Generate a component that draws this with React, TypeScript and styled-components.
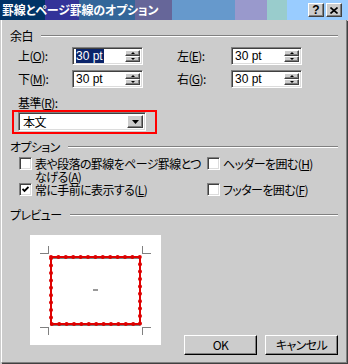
import styled, { createGlobalStyle, css } from 'styled-components';

const GlobalStyle = createGlobalStyle`
  html, body {
    margin: 0;
    padding: 0;
    background: #cccccc;
  }
  body {
    font-family: 'Noto Sans CJK JP', sans-serif;
    font-size: 12px;
    line-height: 12px;
    letter-spacing: -0.6px;
    font-feature-settings: 'palt';
    color: #000;
  }
`;

const sunken = css`
  border: 1px solid;
  border-color: #808080 #ffffff #ffffff #808080;
  box-shadow: inset 1px 1px 0 #404040, inset -1px -1px 0 #dcdcdc;
`;

const raised = css`
  border: 1px solid;
  border-color: #ffffff #404040 #404040 #ffffff;
  box-shadow: inset -1px -1px 0 #808080;
  background: #cccccc;
`;

const Window = styled.div`
  width: 348px;
  height: 364px;
  display: flex;
  flex-direction: column;
  background: #cccccc;
  overflow: hidden;
`;

const TitleBar = styled.div`
  height: 20px;
  flex: none;
  display: flex;
  align-items: center;
  justify-content: space-between;
  padding: 0 6px 0 2px;
  background: linear-gradient(
    to right,
    #003366 0 45px,
    #333399 45px 79px,
    #336699 79px 135px,
    #666699 135px 172px,
    #6699cc 172px 235px,
    #9999cc 235px 267px,
    #99cccc 267px 287px,
    #99ccff 287px
  );
`;

const TitleText = styled.span`
  color: #ffffff;
  font-weight: bold;
  font-size: 12px;
  letter-spacing: -0.2px;
`;

const CaptionButtons = styled.div`
  display: flex;
  gap: 2px;
`;

const CaptionButton = styled.div`
  ${raised};
  width: 16px;
  height: 14px;
  box-sizing: border-box;
  display: flex;
  align-items: center;
  justify-content: center;
  font-family: 'Liberation Sans', sans-serif;
  font-weight: bold;
  font-size: 12px;
  letter-spacing: 0;
`;

const Body = styled.div`
  flex: 1;
  min-height: 0;
  display: flex;
  flex-direction: column;
  padding: 10px 8px 0 8px;
  margin: 0 1px 1px 1px;
  border-left: 1px solid #ffffff;
  border-right: 1px solid #808080;
  border-bottom: 1px solid #808080;
  box-shadow: 1px 1px 0 #404040;
`;

const GroupHeader = styled.div<{ $top?: number }>`
  flex: none;
  display: flex;
  align-items: center;
  gap: 8px;
  height: 12px;
  margin-top: ${({ $top }) => $top ?? 0}px;
  &::after {
    content: '';
    flex: 1;
    border-top: 1px solid #808080;
    border-bottom: 1px solid #ffffff;
  }
`;

const MarginGrid = styled.div`
  flex: none;
  display: grid;
  grid-template-columns: 159px 160px;
  row-gap: 5px;
  margin: 5px 0 0 8px;
`;

const Field = styled.div`
  display: flex;
  align-items: center;
`;

const FieldLabel = styled.span`
  width: 54px;
`;

const Acc = styled.span`
  text-decoration: underline;
  text-underline-offset: 1px;
`;

const SpinBox = styled.div`
  ${sunken};
  width: 71px;
  height: 18px;
  box-sizing: border-box;
  background: #ffffff;
  display: flex;
  align-items: stretch;
  padding: 2px 2px 2px 3px;
`;

const SpinText = styled.span<{ $selected?: boolean }>`
  flex: 1;
  display: flex;
  align-items: center;
  font-family: 'Liberation Sans', sans-serif;
  font-size: 12px;
  letter-spacing: 0;
  span {
    background: ${({ $selected }) => ($selected ? '#0a246a' : 'transparent')};
    color: ${({ $selected }) => ($selected ? '#ffffff' : '#000000')};
    padding: 0 1px 0 0;
    line-height: 14px;
  }
`;

const SpinButtons = styled.div`
  width: 15px;
  display: flex;
  flex-direction: column;
`;

const SpinButton = styled.div<{ $down?: boolean }>`
  ${raised};
  flex: 1;
  box-sizing: border-box;
  display: flex;
  align-items: center;
  justify-content: center;
  &::before {
    content: '';
    border-left: 2px solid transparent;
    border-right: 2px solid transparent;
    ${({ $down }) =>
      $down ? 'border-top: 2px solid #000;' : 'border-bottom: 2px solid #000;'}
  }
`;

const BaseLabel = styled.div`
  flex: none;
  margin: 9px 0 0 8px;
`;

const Highlight = styled.div`
  flex: none;
  margin: 1px 0 0 2px;
  width: 145px;
  height: 24px;
  box-sizing: border-box;
  border: 2px solid #ff0000;
  padding: 0 0 0 4px;
`;

const Combo = styled.div`
  ${sunken};
  width: 128px;
  height: 19px;
  box-sizing: border-box;
  background: #ffffff;
  display: flex;
  align-items: stretch;
  padding: 2px;
`;

const ComboText = styled.span`
  flex: 1;
  display: flex;
  align-items: center;
  padding-left: 2px;
`;

const DropButton = styled.div`
  ${raised};
  width: 16px;
  box-sizing: border-box;
  display: flex;
  align-items: center;
  justify-content: center;
`;

const OptionsGrid = styled.div`
  flex: none;
  display: grid;
  grid-template-columns: 188px 1fr;
  margin: 4px 0 0 9px;
`;

const Option = styled.div`
  display: flex;
  align-items: flex-start;
  gap: 3px;
`;

const OptionText = styled.span`
  line-height: 13px;
  white-space: nowrap;
`;

const CheckBox = styled.div`
  ${sunken};
  flex: none;
  width: 13px;
  height: 13px;
  box-sizing: border-box;
  background: #ffffff;
  display: flex;
  align-items: center;
  justify-content: center;
`;

const PreviewRow = styled.div`
  flex: none;
  display: flex;
  margin-top: 14px;
  padding-left: 20px;
`;

const Preview = styled.div`
  width: 131px;
  height: 110px;
  background: #ffffff;
  flex: none;
  svg {
    display: block;
  }
`;

const ButtonBar = styled.div`
  display: flex;
  gap: 8px;
  margin: 100px 0 0 23px;
`;

const PushButton = styled.div`
  border: 1px solid;
  border-color: #ffffff #000000 #000000 #ffffff;
  box-shadow: inset -1px -1px 0 #808080;
  background: #cccccc;
  width: 73px;
  height: 20px;
  box-sizing: border-box;
  display: flex;
  align-items: center;
  justify-content: center;
`;

const Spin = ({ value, selected }: { value: string; selected?: boolean }) => (
  <SpinBox>
    <SpinText $selected={selected}>
      <span>{value}</span>
    </SpinText>
    <SpinButtons>
      <SpinButton />
      <SpinButton $down />
    </SpinButtons>
  </SpinBox>
);

const Check = ({ checked }: { checked?: boolean }) => (
  <CheckBox>
    {checked && (
      <svg width="7" height="7" viewBox="0 0 7 7">
        <polyline points="0.5,3 2.5,5 6.5,1" fill="none" stroke="#000" strokeWidth="1.8" />
      </svg>
    )}
  </CheckBox>
);

const corner = (x: number, y: number, dx: number, dy: number) => (
  <path
    d={`M${x + dx * 8} ${y} H${x} V${y + dy * 8}`}
    fill="none"
    stroke="#000"
    strokeWidth="1"
    strokeDasharray="1 1"
  />
);

const PreviewDrawing = () => (
  <svg width="131" height="110" viewBox="0 0 131 110">
    {corner(18.5, 18.5, -1, -1)}
    {corner(112.5, 18.5, 1, -1)}
    {corner(18.5, 92.5, -1, 1)}
    {corner(112.5, 92.5, 1, 1)}
    <rect x="21" y="23" width="89" height="67" fill="none" stroke="#000" strokeWidth="1" />
    <rect x="21" y="22" width="89" height="67" fill="none" stroke="#e00000" strokeWidth="2" />
    <rect
      x="21"
      y="22"
      width="89"
      height="67"
      fill="none"
      stroke="#dd0000"
      strokeWidth="4"
      strokeLinecap="round"
      strokeDasharray="0 7.4"
    />
    <rect x="63" y="54" width="5" height="2" fill="#999999" />
  </svg>
);

export default function App() {
  return (
    <>
      <GlobalStyle />
      <Window>
        <TitleBar>
          <TitleText>罫線とページ罫線のオプション</TitleText>
          <CaptionButtons>
            <CaptionButton>?</CaptionButton>
            <CaptionButton>
              <svg width="8" height="7" viewBox="0 0 8 7">
                <path d="M0.5 0.5 L7.5 6.5 M7.5 0.5 L0.5 6.5" stroke="#000" strokeWidth="1.6" />
              </svg>
            </CaptionButton>
          </CaptionButtons>
        </TitleBar>
        <Body>
          <GroupHeader>余白</GroupHeader>
          <MarginGrid>
            <Field>
              <FieldLabel>
                上(<Acc>O</Acc>):
              </FieldLabel>
              <Spin value="30 pt" selected />
            </Field>
            <Field>
              <FieldLabel>
                左(<Acc>E</Acc>):
              </FieldLabel>
              <Spin value="30 pt" />
            </Field>
            <Field>
              <FieldLabel>
                下(<Acc>M</Acc>):
              </FieldLabel>
              <Spin value="30 pt" />
            </Field>
            <Field>
              <FieldLabel>
                右(<Acc>G</Acc>):
              </FieldLabel>
              <Spin value="30 pt" />
            </Field>
          </MarginGrid>
          <BaseLabel>
            基準(<Acc>R</Acc>):
          </BaseLabel>
          <Highlight>
            <Combo>
              <ComboText>本文</ComboText>
              <DropButton>
                <svg width="7" height="4" viewBox="0 0 7 4">
                  <polygon points="0,0 7,0 3.5,4" fill="#000" />
                </svg>
              </DropButton>
            </Combo>
          </Highlight>
          <GroupHeader $top={7}>オプション</GroupHeader>
          <OptionsGrid>
            <Option>
              <Check />
              <OptionText>
                表や段落の罫線をページ罫線とつ
                <br />
                なげる(<Acc>A</Acc>)
              </OptionText>
            </Option>
            <Option>
              <Check />
              <OptionText>
                ヘッダーを囲む(<Acc>H</Acc>)
              </OptionText>
            </Option>
            <Option>
              <Check checked />
              <OptionText>
                常に手前に表示する(<Acc>L</Acc>)
              </OptionText>
            </Option>
            <Option>
              <Check />
              <OptionText>
                フッターを囲む(<Acc>F</Acc>)
              </OptionText>
            </Option>
          </OptionsGrid>
          <GroupHeader $top={13}>プレビュー</GroupHeader>
          <PreviewRow>
            <Preview>
              <PreviewDrawing />
            </Preview>
            <ButtonBar>
              <PushButton>OK</PushButton>
              <PushButton>キャンセル</PushButton>
            </ButtonBar>
          </PreviewRow>
        </Body>
      </Window>
    </>
  );
}
